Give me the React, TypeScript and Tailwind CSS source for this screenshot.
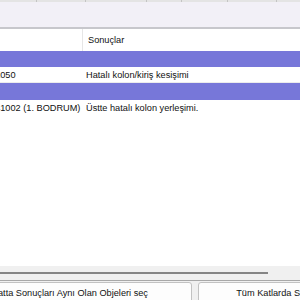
export default function App() {
  return (
    <div className="w-[300px] h-[300px] overflow-hidden bg-white flex flex-col font-['Liberation_Sans',Arial,sans-serif] text-[9.2px] text-[#111]">
      {/* top grid edge */}
      <div className="h-[2px] flex bg-[#e4e4e4] shrink-0">
        <div className="w-[37px] border-r border-[#c4c4c4]" />
        <div className="w-[49px] border-r border-[#c4c4c4]" />
        <div className="w-[61px] border-r border-[#c4c4c4]" />
        <div className="w-[35px] border-r border-[#c4c4c4]" />
        <div className="w-[46px] border-r border-[#c4c4c4]" />
        <div className="w-[49px] border-r border-[#c4c4c4]" />
        <div className="flex-1" />
      </div>

      {/* toolbar area */}
      <div className="h-[27px] shrink-0 bg-[#f2f0f7] border-b-2 border-[#c7c7cc]" />

      {/* results list */}
      <div className="flex h-[22px] shrink-0 items-center">
        <div className="w-[83px] h-full border-r border-[#e6e6e6]" />
        <div className="pl-[5px] pt-[2px]">Sonuçlar</div>
      </div>

      <div className="h-[16px] shrink-0 bg-[#7777d9]" />
      <div className="flex h-[16px] shrink-0 items-center pt-[2px] border-b border-[#ececec]">
        <div className="w-[83px] overflow-hidden whitespace-nowrap">
          <span className="ml-[-11px]">K1050</span>
        </div>
        <div className="pl-[3px] whitespace-nowrap">Hatalı kolon/kiriş kesişimi</div>
      </div>
      <div className="h-[17px] shrink-0 bg-[#7777d9]" />
      <div className="flex h-[16px] shrink-0 items-center pt-[2px]">
        <div className="w-[83px] overflow-hidden whitespace-nowrap">
          <span className="ml-[-11px]">K41002 (1. BODRUM)</span>
        </div>
        <div className="pl-[3px] whitespace-nowrap">Üstte hatalı kolon yerleşimi.</div>
      </div>

      <div className="flex-1" />

      {/* horizontal scrollbar */}
      <div className="h-[14px] shrink-0 bg-[#f0f0f0] flex items-center">
        <div className="w-[268px] h-[2px] bg-[#858585]" />
      </div>

      {/* buttons */}
      <div className="h-[20px] shrink-0 bg-[#f0f0f0] border-t border-[#a8a8a8] flex gap-[6px] pt-[1px] overflow-hidden">
        <button className="ml-[-66px] w-[258px] h-[24px] shrink-0 rounded-[3px] border border-[#c2c2c2] bg-[#fdfdfd] text-center whitespace-nowrap">
          Bu Katta Sonuçları Aynı Olan Objeleri seç
        </button>
        <button className="w-[150px] h-[24px] shrink-0 rounded-[3px] border border-[#c2c2c2] bg-[#fdfdfd] text-center whitespace-nowrap">
          Tüm Katlarda Seç
        </button>
      </div>
    </div>
  );
}
